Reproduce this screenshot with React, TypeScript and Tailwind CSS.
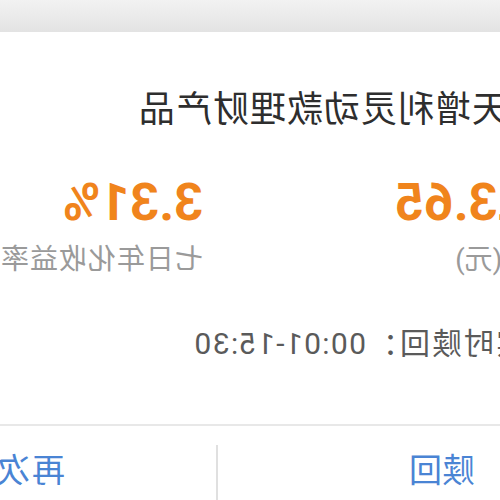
import React from 'react';

const cjk = "font-['Roboto','Noto_Sans_CJK_SC',sans-serif]";

export default function App() {
  // the reference is a mirrored capture, so the whole card is flipped
  return (
    <div className="w-[500px] h-[500px] overflow-hidden bg-white -scale-x-100">
      <div className="h-[32px] bg-gradient-to-b from-[#f2f2f2] to-[#e3e3e3]" />

      <div className={`mt-[60px] w-[362px] flex justify-end whitespace-nowrap text-[36px] leading-none tracking-[1px] text-[#2e2e2e] ${cjk}`}>
        天增利灵动款理财产品
      </div>

      <div className="mt-[48px] flex">
        <div className="w-[297px] flex flex-col shrink-0">
          <div className="h-[53px] w-[105px] flex items-center justify-end whitespace-nowrap font-['Roboto',sans-serif] font-bold text-[51px] leading-none text-[#f0841c]">
            23.65
          </div>
          <div className={`mt-[17px] w-[45px] flex justify-end whitespace-nowrap text-[28px] leading-none text-[#9a9a9a] ${cjk}`}>
            昨日收益(元)
          </div>
        </div>
        <div className="flex flex-col whitespace-nowrap">
          <div className="h-[53px] flex items-center font-['Roboto',sans-serif] font-bold text-[51px] leading-none text-[#f0841c]">
            3.31%
          </div>
          <div className={`mt-[17px] text-[28px] leading-none tracking-[1px] text-[#9a9a9a] ${cjk}`}>
            七日年化收益率
          </div>
        </div>
      </div>

      <div className={`mt-[55px] w-[307px] flex justify-end whitespace-nowrap text-[30px] leading-none text-[#5a5a5a] ${cjk}`}>
        <span className="tracking-[2px]">实时赎回：</span>
        <span className="tracking-[1.4px]">00:01-15:30</span>
      </div>

      <div className="mt-[65px] h-[2px] bg-[#e8e8e8]" />

      <div className={`flex h-[80px] text-[33px] leading-none text-[#4a84d4] ${cjk}`}>
        <div className="w-[282px] shrink-0 pl-[25px] pt-[28px]">赎回</div>
        <div className="w-[2px] mt-[19px] bg-[#e0e0e0] shrink-0" />
        <div className="pl-[151px] pt-[28px] whitespace-nowrap tracking-[2px]">再次购买</div>
      </div>
    </div>
  );
}
